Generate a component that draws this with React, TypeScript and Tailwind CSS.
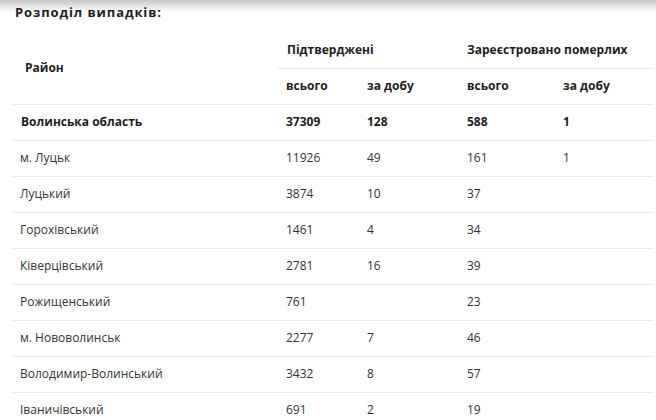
import React from "react";

const rows: [string, string, string, string, string][] = [
  ["м. Луцьк", "11926", "49", "161", "1"],
  ["Луцький", "3874", "10", "37", ""],
  ["Горохівський", "1461", "4", "34", ""],
  ["Ківерцівський", "2781", "16", "39", ""],
  ["Рожищенський", "761", "", "23", ""],
  ["м. Нововолинськ", "2277", "7", "46", ""],
  ["Володимир-Волинський", "3432", "8", "57", ""],
  ["Іваничівський", "691", "2", "19", ""],
];

export default function App() {
  return (
    <div
      className="w-[656px] h-[420px] overflow-hidden bg-white bg-[linear-gradient(to_bottom,#c6c6c6_0px,#ffffff_12px)] text-[#333]"
      style={{ fontFamily: '"Open Sans", "Noto Sans", sans-serif' }}
    >
      <div className="pl-[15px] pt-[3px] h-[32px] text-[13px] leading-[19px] tracking-[0.9px] font-bold text-[#1e1e1e]">
        Розподіл випадків:
      </div>
      <table className="ml-[12px] w-[641px] table-fixed border-collapse text-[12px]">
        <colgroup>
          <col className="w-[266px]" />
          <col className="w-[81px]" />
          <col className="w-[100px]" />
          <col className="w-[96px]" />
          <col className="w-[98px]" />
        </colgroup>
        <thead className="font-bold text-[#1e1e1e]">
          <tr className="h-[36px]">
            <th rowSpan={2} className="text-left align-middle pl-[13px] font-bold border-b border-[#ebebeb]">
              Район
            </th>
            <th colSpan={2} className="text-left align-middle pl-[9px] font-bold border-b border-[#ebebeb]">
              Підтверджені
            </th>
            <th colSpan={2} className="text-left align-middle pl-[8px] font-bold border-b border-[#ebebeb]">
              Зареєстровано померлих
            </th>
          </tr>
          <tr className="h-[36px]">
            <th className="text-left pl-[8px] font-bold border-b border-[#ebebeb]">всього</th>
            <th className="text-left pl-[8px] font-bold border-b border-[#ebebeb]">за добу</th>
            <th className="text-left pl-[8px] font-bold border-b border-[#ebebeb]">всього</th>
            <th className="text-left pl-[8px] font-bold border-b border-[#ebebeb]">за добу</th>
          </tr>
        </thead>
        <tbody>
          <tr className="h-[36px] font-bold text-[#1e1e1e] border-b border-[#ebebeb]">
            <td className="pl-[9px]">Волинська область</td>
            <td className="pl-[8px]">37309</td>
            <td className="pl-[8px]">128</td>
            <td className="pl-[8px]">588</td>
            <td className="pl-[8px]">1</td>
          </tr>
          {rows.map((r, i) => (
            <tr key={i} className="h-[36px] border-b border-[#ebebeb]">
              <td className="pl-[8px]">{r[0]}</td>
              <td className="pl-[8px]">{r[1]}</td>
              <td className="pl-[8px]">{r[2]}</td>
              <td className="pl-[8px]">{r[3]}</td>
              <td className="pl-[8px]">{r[4]}</td>
            </tr>
          ))}
        </tbody>
      </table>
    </div>
  );
}
